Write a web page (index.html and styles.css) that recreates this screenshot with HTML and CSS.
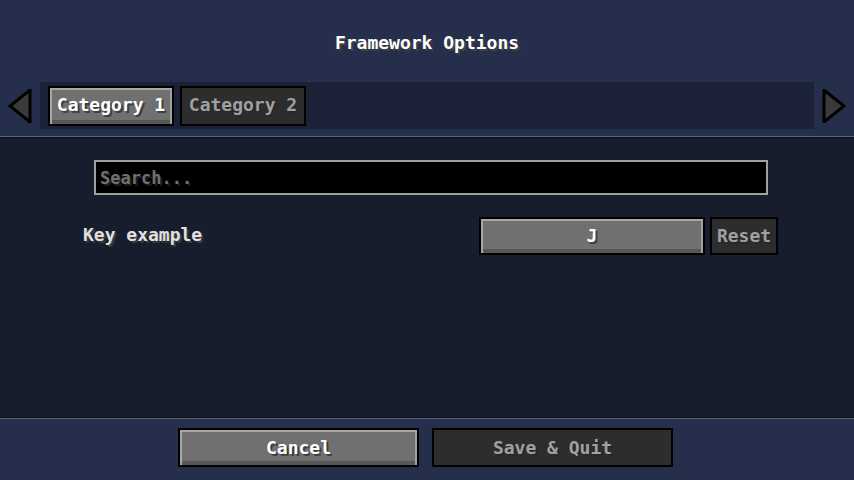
FILE: index.html
```html
<!DOCTYPE html>
<html>
<head>
<meta charset="utf-8">
<link rel="stylesheet" href="styles.css">
</head>
<body>
<div class="screen">
  <header class="header">
    <div class="title">Framework Options</div>
    <div class="tab-row">
      <svg class="arrow" width="24" height="34" viewBox="0 0 24 34">
        <polygon points="22,1 22,33 2,17" fill="#3a3a3a" stroke="#000" stroke-width="3" stroke-linejoin="miter"/>
      </svg>
      <div class="tab-bar">
        <button class="btn tab active">Category 1</button>
        <button class="btn tab dark">Category 2</button>
      </div>
      <svg class="arrow" width="24" height="34" viewBox="0 0 24 34">
        <polygon points="2,1 2,33 22,17" fill="#3a3a3a" stroke="#000" stroke-width="3" stroke-linejoin="miter"/>
      </svg>
    </div>
  </header>
  <div class="sep-top"></div>
  <main class="content">
    <div class="search">Search...</div>
    <div class="option-row">
      <span class="label">Key example</span>
      <div class="controls">
        <button class="btn key">J</button>
        <button class="btn dark reset">Reset</button>
      </div>
    </div>
  </main>
  <div class="sep-bottom"></div>
  <footer class="footer">
    <button class="btn wide">Cancel</button>
    <button class="btn wide dark">Save &amp; Quit</button>
  </footer>
</div>
</body>
</html>
```
FILE: styles.css
```css
* { box-sizing: border-box; }
html, body { margin: 0; padding: 0; }
body {
  width: 854px;
  height: 480px;
  overflow: hidden;
  font-family: "DejaVu Sans Mono", monospace;
  font-size: 18px;
  font-weight: bold;
}
.screen {
  display: flex;
  flex-direction: column;
  height: 480px;
}
.header {
  height: 136px;
  flex: none;
  background: #252f4b;
  display: flex;
  flex-direction: column;
  align-items: stretch;
  padding-top: 33px;
}
.title {
  height: 20px;
  line-height: 20px;
  text-align: center;
  color: #ffffff;
  text-shadow: 2px 2px 0 #3f3f3f;
}
.tab-row {
  margin-top: 29px;
  display: flex;
  align-items: center;
  gap: 8px;
  padding: 0 8px;
}
.arrow { display: block; flex: none; }
.tab-bar {
  width: 774px;
  height: 47px;
  background: #1b2237;
  display: flex;
  align-items: center;
  gap: 6px;
  padding-left: 8px;
}
.btn {
  font: inherit;
  margin: 0;
  padding: 0;
  border: 2px solid #000;
  background: #707070;
  color: #ffffff;
  text-shadow: 2px 2px 0 #3f3f3f;
  box-shadow: inset 2px 2px 0 #a7a7a7, inset -2px 0 0 #a0a0a0, inset 0 -4px 0 #575757;
  display: flex;
  align-items: center;
  justify-content: center;
  line-height: 20px;
}
.btn.dark {
  background: #2d2d2d;
  color: #a0a0a0;
  text-shadow: 2px 2px 0 #282828;
  box-shadow: none;
}
.tab {
  width: 126px;
  height: 40px;
  padding-bottom: 1px;
}
.sep-top {
  height: 2px;
  flex: none;
  border-top: 1px solid #5c6781;
  background: #0b0e16;
}
.content {
  height: 279px;
  flex: none;
  background: #171d2d;
  display: flex;
  flex-direction: column;
  padding-top: 22px;
}
.search {
  margin-left: 94px;
  width: 674px;
  height: 35px;
  border: 2px solid #a0a0a0;
  background: #000;
  color: #707070;
  text-shadow: 2px 2px 0 #1c1c1c;
  display: flex;
  align-items: center;
  padding-left: 4px;
  font-size: 17px;
}
.option-row {
  margin-top: 22px;
  margin-left: 83px;
  width: 695px;
  display: flex;
  align-items: center;
  justify-content: space-between;
}
.label {
  color: #e0e0e0;
  text-shadow: 2px 2px 0 #383838;
  margin-top: -3px;
}
.controls {
  display: flex;
  gap: 5px;
}
.key {
  width: 226px;
  height: 38px;
}
.reset {
  width: 68px;
  height: 38px;
  color: #a8a8a8;
}
.sep-bottom {
  height: 2px;
  flex: none;
  border-bottom: 1px solid #5c6781;
  background: #0b0e16;
}
.footer {
  flex: 1;
  background: #252f4b;
  display: flex;
  justify-content: center;
  gap: 13px;
  padding-top: 9px;
  padding-right: 3px;
}
.wide {
  width: 241px;
  height: 39px;
}
```
